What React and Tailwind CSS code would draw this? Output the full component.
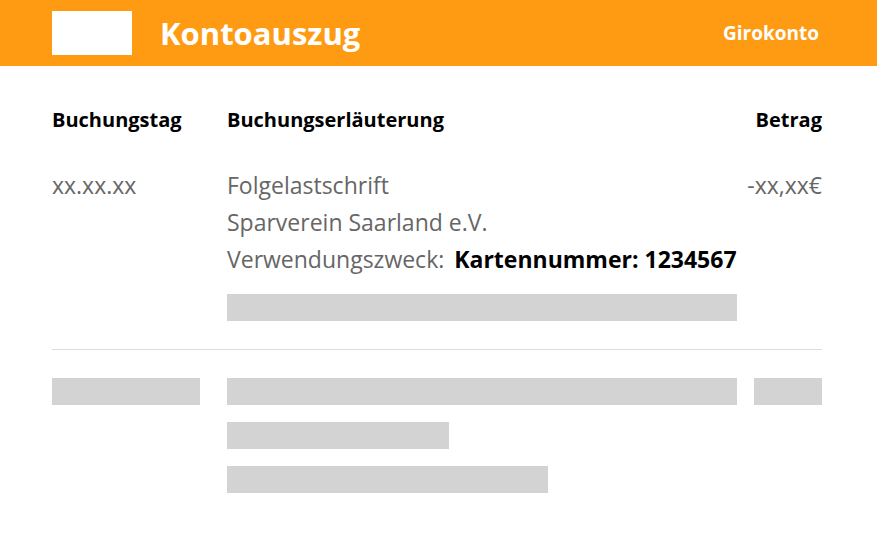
export default function App() {
  const font = { fontFamily: '"Open Sans", "DejaVu Sans", sans-serif' };
  return (
    <div className="w-[877px] h-[551px] bg-white" style={font}>
      {/* Header */}
      <div className="h-[66px] bg-[#fe9b13] flex items-center pl-[52px] pr-[58px]">
        <div className="w-[80px] h-[44px] bg-white" />
        <h1 className="ml-[28px] text-[31px] font-bold text-white leading-none">Kontoauszug</h1>
        <span className="ml-auto text-[19px] font-bold text-white">Girokonto</span>
      </div>

      <div className="px-[52px] pr-[55px]">
        {/* Column heads */}
        <div className="flex pt-[40px] text-[20px] font-bold text-black leading-[28px]">
          <div className="w-[175px]">Buchungstag</div>
          <div className="w-[510px]">Buchungserläuterung</div>
          <div className="flex-1 text-right">Betrag</div>
        </div>

        {/* Entry */}
        <div className="flex pt-[33px] pb-[28px] border-b border-[#dcdcdc] text-[23px] text-[#666] leading-[37px]">
          <div className="w-[175px]">xx.xx.xx</div>
          <div className="w-[510px]">
            <div>Folgelastschrift</div>
            <div>Sparverein Saarland e.V.</div>
            <div>
              Verwendungszweck:{' '}
              <span className="ml-[4px] font-bold text-black">Kartennummer: 1234567</span>
            </div>
            <div className="mt-[16px] h-[27px] bg-[#d3d3d3]" />
          </div>
          <div className="flex-1 text-right">-xx,xx€</div>
        </div>

        {/* Placeholder entry */}
        <div className="flex pt-[28px]">
          <div className="w-[175px]">
            <div className="w-[148px] h-[27px] bg-[#d3d3d3]" />
          </div>
          <div className="w-[510px] flex flex-col gap-[17px]">
            <div className="h-[27px] bg-[#d3d3d3]" />
            <div className="w-[222px] h-[27px] bg-[#d3d3d3]" />
            <div className="w-[321px] h-[27px] bg-[#d3d3d3]" />
          </div>
          <div className="flex-1 flex justify-end">
            <div className="w-[68px] h-[27px] bg-[#d3d3d3]" />
          </div>
        </div>
      </div>
    </div>
  );
}
